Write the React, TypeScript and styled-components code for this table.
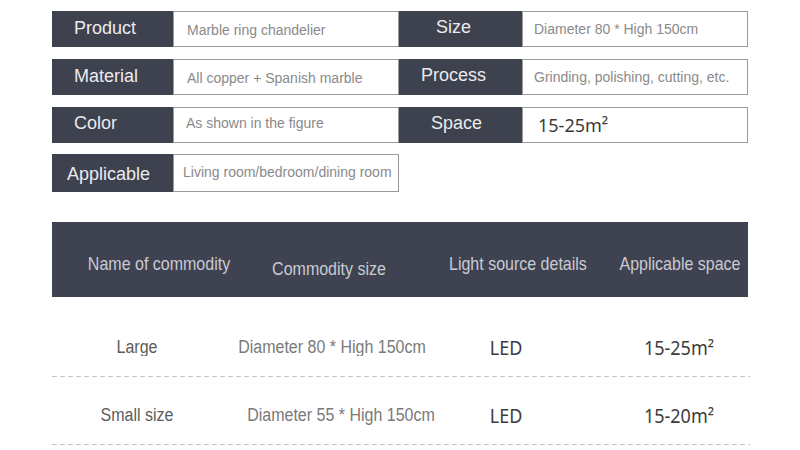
import React, { ReactElement } from "react";
import styled, { createGlobalStyle } from "styled-components";

const GlobalStyle = createGlobalStyle`
    body {
        margin: 0;
        background: #ffffff;
        font-family: "Liberation Sans", Arial, sans-serif;
    }
`;

const Page = styled.div`
    width: 800px;
    height: 450px;
    overflow: hidden;
    padding: 11px 0 0 52px;
    box-sizing: border-box;
`;

const SpecList = styled.div`
    display: flex;
    flex-direction: column;
    gap: 12px;
    width: 696px;
`;

const SpecRow = styled.div<{ $height?: number; $tight?: boolean }>`
    display: grid;
    grid-template-columns: 121px 226px 123px 226px;
    height: ${(p) => p.$height ?? 36}px;
    margin-top: ${(p) => (p.$tight ? -1 : 0)}px;
`;

const shift = (dy = 0) => `
    padding-top: ${dy > 0 ? dy * 2 : 0}px;
    padding-bottom: ${dy < 0 ? -dy * 2 : 0}px;
`;

const SpecLabel = styled.div<{ $centered?: boolean; $indent?: number; $dy?: number }>`
    display: flex;
    align-items: center;
    justify-content: ${(p) => (p.$centered ? "center" : "flex-start")};
    box-sizing: border-box;
    background: #3e414e;
    color: #ebebef;
    font-size: 18px;
    white-space: nowrap;
    padding-left: ${(p) => p.$indent ?? 0}px;
    padding-right: ${(p) => (p.$centered ? 14 : 0)}px;
    ${(p) => shift(p.$dy)}
`;

const SpecValue = styled.div<{ $indent?: number; $dy?: number; $big?: boolean }>`
    display: flex;
    align-items: center;
    box-sizing: border-box;
    background: #ffffff;
    border: 1px solid #9a9a9a;
    color: ${(p) => (p.$big ? "#3a3a3a" : "#8a8a8a")};
    font-family: ${(p) => (p.$big ? `"Noto Sans", sans-serif` : `"Liberation Sans", Arial, sans-serif`)};
    font-size: ${(p) => (p.$big ? 18 : 14)}px;
    white-space: nowrap;
    padding-left: ${(p) => p.$indent ?? 13}px;
    ${(p) => shift(p.$dy)}
`;

const Table = styled.div`
    margin-top: 30px;
    width: 698px;
`;

const columns = "170px 220px 128px 178px";

const HeadRow = styled.div`
    display: grid;
    grid-template-columns: ${columns};
    align-items: center;
    width: 696px;
    height: 75px;
    padding-top: 8px;
    box-sizing: border-box;
    background: #3f4250;
`;

const HeadCell = styled.div<{ $dx?: number; $dy?: number }>`
    text-align: center;
    white-space: nowrap;
    color: #c9cbd2;
    font-size: 16px;
    transform: translate(${(p) => p.$dx ?? 0}px, ${(p) => p.$dy ?? 0}px) scaleY(1.12);
`;

const BodyRow = styled.div<{ $first?: boolean }>`
    display: grid;
    grid-template-columns: ${columns};
    align-items: center;
    height: 68px;
    margin-top: ${(p) => (p.$first ? 12 : 0)}px;
    padding-top: 8px;
    box-sizing: border-box;
    background: repeating-linear-gradient(to right, #c6c6c6 0 5px, transparent 5px 8px) bottom / 100% 1px
        no-repeat;
`;

const BodyCell = styled.div<{ $dx?: number; $tone: "name" | "size" | "strong" }>`
    text-align: center;
    white-space: nowrap;
    font-family: ${(p) => (p.$tone === "strong" ? `"Noto Sans", sans-serif` : `"Liberation Sans", Arial, sans-serif`)};
    font-size: ${(p) => (p.$tone === "strong" ? 18 : 16)}px;
    color: ${(p) => (p.$tone === "name" ? "#5c5c5c" : p.$tone === "size" ? "#7a7a7a" : "#3c3c3c")};
    transform: translateX(${(p) => p.$dx ?? 0}px) scaleY(1.1);
`;

const rows = [
    { name: "Large", size: "Diameter 80 * High 150cm", sizeDx: 0, light: "LED", area: "15-25m²" },
    { name: "Small size", size: "Diameter 55 * High 150cm", sizeDx: 9, light: "LED", area: "15-20m²" },
];

const App = (): ReactElement => {
    return (
        <Page>
            <GlobalStyle />
            <SpecList>
                <SpecRow>
                    <SpecLabel $indent={22} $dy={-1}>Product</SpecLabel>
                    <SpecValue $indent={13} $dy={1}>Marble ring chandelier</SpecValue>
                    <SpecLabel $centered $dy={-1.5}>Size</SpecLabel>
                    <SpecValue $indent={11}>Diameter 80 * High 150cm</SpecValue>
                </SpecRow>
                <SpecRow>
                    <SpecLabel $indent={22} $dy={-1}>Material</SpecLabel>
                    <SpecValue $indent={13} $dy={1}>All copper + Spanish marble</SpecValue>
                    <SpecLabel $centered $dy={-1.5}>Process</SpecLabel>
                    <SpecValue $indent={11}>Grinding, polishing, cutting, etc.</SpecValue>
                </SpecRow>
                <SpecRow>
                    <SpecLabel $indent={22} $dy={-1.5}>Color</SpecLabel>
                    <SpecValue $indent={12} $dy={-2}>As shown in the figure</SpecValue>
                    <SpecLabel $centered $dy={-1.5}>
                        <span style={{ marginLeft: 6 }}>Space</span>
                    </SpecLabel>
                    <SpecValue $indent={15} $big>15-25m²</SpecValue>
                </SpecRow>
                <SpecRow $height={38} $tight>
                    <SpecLabel $indent={15} $dy={1}>Applicable</SpecLabel>
                    <SpecValue $indent={9} $dy={-1.5}>Living room/bedroom/dining room</SpecValue>
                </SpecRow>
            </SpecList>
            <Table>
                <HeadRow>
                    <HeadCell $dx={22}>Name of commodity</HeadCell>
                    <HeadCell $dx={-3} $dy={5}>Commodity size</HeadCell>
                    <HeadCell $dx={7}>Light source details</HeadCell>
                    <HeadCell $dx={21}>Applicable space</HeadCell>
                </HeadRow>
                {rows.map((row, i) => (
                    <BodyRow key={row.name} $first={i === 0}>
                        <BodyCell $tone="name">{row.name}</BodyCell>
                        <BodyCell $tone="size" $dx={row.sizeDx}>
                            {row.size}
                        </BodyCell>
                        <BodyCell $tone="strong">{row.light}</BodyCell>
                        <BodyCell $tone="strong" $dx={20}>
                            {row.area}
                        </BodyCell>
                    </BodyRow>
                ))}
            </Table>
        </Page>
    );
};

export default App;
